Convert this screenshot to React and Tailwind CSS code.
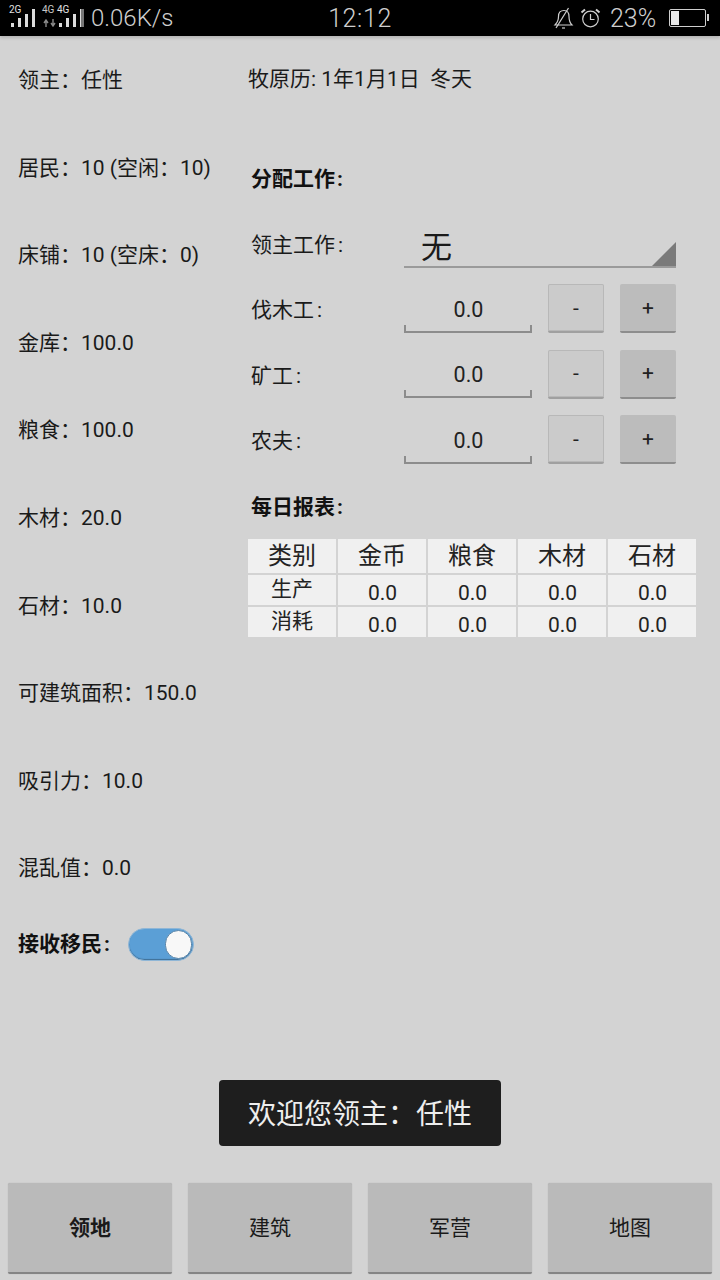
import React from "react";

function Bars() {
  const heights = [4, 9, 13, 18];
  return (
    <div className="flex items-end gap-[4px]">
      {heights.map((b, i) => (
        <div key={i} className="w-[3px] bg-[#dcdcdc]" style={{ height: b }} />
      ))}
    </div>
  );
}

function StatusBar() {
  return (
    <div className="relative h-[36px] bg-black flex items-center shrink-0 shadow-[0_2px_3px_rgba(0,0,0,0.15)] text-[#cfcfcf] font-light">
      <div className="absolute left-[9px] top-[4px] text-[10px] leading-[12px] font-normal text-[#e2e2e2]">2G</div>
      <div className="absolute left-[11px] bottom-[9px]"><Bars /></div>
      <div className="absolute left-[42px] top-[4px] text-[10px] leading-[12px] font-normal text-[#c8c8c8]">4G</div>
      <div className="absolute left-[57px] top-[4px] text-[10px] leading-[12px] font-normal text-[#e2e2e2]">4G</div>
      <div className="absolute left-[43px] top-[19px]">
        <svg width="13" height="8" viewBox="0 0 13 8" fill="none" stroke="#8a8a8a" strokeWidth="1.4">
          <path d="M3 8 V2 M1 4 L3 1 L5 4 M10 0 V6 M8 4 L10 7 L12 4" />
        </svg>
      </div>
      <div className="absolute left-[59px] bottom-[9px] flex items-end gap-[4px]">
        <Bars />
      </div>
      <div className="absolute left-[81px] bottom-[9px] w-[3px] h-[18px] bg-[#777777]" />
      <span className="absolute left-[91px] top-0 text-[24px] leading-[37px]">0.06K/s</span>
      <span className="absolute left-0 right-0 text-center text-[25px] leading-[37px] tracking-[0.6px]">12:12</span>
      <svg className="absolute left-[553px] top-[7px]" width="21" height="22" viewBox="0 0 21 22" fill="none" stroke="#cfcfcf" strokeWidth="1.2">
        <path d="M2 18 C4 16 5.5 14 5.5 9.5 C5.5 5.5 7.5 3.5 11 3.5 C14.5 3.5 16 5.5 16 9.5 C16 14 17 16 19 18 Z" />
        <path d="M9 21 H12" />
        <path d="M3 21 L15.5 1" />
      </svg>
      <svg className="absolute left-[580px] top-[8px]" width="21" height="20" viewBox="0 0 21 20" fill="none" stroke="#cfcfcf" strokeWidth="1.2">
        <circle cx="10.5" cy="11" r="7.8" />
        <path d="M10.5 6 V11.5 H14.5" />
        <path d="M1.5 4.5 L5 1.5 M19.5 4.5 L16 1.5" strokeWidth="2" />
      </svg>
      <span className="absolute left-[610px] top-0 text-[25px] leading-[37px]">23%</span>
      <div className="absolute left-[669px] top-[9px] w-[37px] h-[18px] border border-[#cfcfcf] rounded-[2px] p-[1px]">
        <div className="w-[8px] h-full bg-[#e8e8e8]" />
      </div>
      <div className="absolute left-[707px] top-[14px] w-[2px] h-[7px] bg-[#cfcfcf]" />
    </div>
  );
}

function LeftRow({ children }) {
  return <div className="h-[87.6px] flex items-center text-[21px] text-[#1a1a1a] whitespace-nowrap">{children}</div>;
}

function Toggle() {
  return (
    <div className="relative w-[66px] h-[33px] rounded-full bg-[#5b9fd6] border border-[#8fb6d6] shadow-[inset_0_-1px_1px_rgba(0,0,0,0.3)]">
      <div className="absolute right-[1px] top-[1px] w-[27px] h-[29px] rounded-full bg-[#f8f8f8] border border-[#5a85a8]" />
    </div>
  );
}

function SmallButton({ label, dark }) {
  return (
    <button className={`w-[56px] h-[49px] pt-[1px] rounded-[2px] text-[21px] text-[#222222] border-b-2 ${dark ? "bg-[#bcbcbc] border-[#8d8d8d]" : "bg-[#cbcbcb] border-[#a0a0a0] shadow-[inset_0_0_0_1px_#b8b8b8]"}`}>
      {label}
    </button>
  );
}

function Label({ text, bold }) {
  return (
    <span className={bold ? "font-bold text-[#111111] text-[21px]" : "text-[#1a1a1a] text-[21px]"}>
      {text}
      <span className={bold ? "ml-[2px]" : "ml-[3px]"}>:</span>
    </span>
  );
}

function WorkRow({ label }) {
  return (
    <div className="h-[65.5px] flex items-center">
      <div className="w-[156px] pl-[3px] mt-[-4px]"><Label text={label} /></div>
      <div className="w-[128px] h-[48px] pl-[1px] relative flex items-center justify-center pt-[4px] text-[21.5px] text-[#222222] border-b-2 border-[#8c8c8c] mt-[-8px]">
        0.0
        <span className="absolute left-0 bottom-0 w-[2px] h-[6px] bg-[#8c8c8c]" />
        <span className="absolute right-0 bottom-0 w-[2px] h-[6px] bg-[#8c8c8c]" />
      </div>
      <div className="ml-[16px] flex gap-[16px] mt-[-8px]">
        <SmallButton label="-" />
        <SmallButton label="+" dark />
      </div>
    </div>
  );
}

function TableRow({ cells, h, size, head }) {
  return (
    <div className="flex gap-[2px]" style={{ height: h }}>
      {cells.map((c, i) => (
        <div key={i} className={`w-[88px] bg-[#f0f0f0] flex items-center justify-center text-[#222222] ${size} ${!head && i > 0 ? "pt-[8px] pl-[1px]" : ""} ${!head && i === 0 ? "pt-[1px]" : ""}`}>{c}</div>
      ))}
    </div>
  );
}

function BottomButton({ label, bold }) {
  return (
    <button className={`flex-1 h-[91px] pt-[3px] bg-[#bababa] border-b-2 border-[#858585] rounded-[2px] shadow-[0_0_1px_rgba(0,0,0,0.25)] text-[21px] text-[#1a1a1a] ${bold ? "font-bold" : ""}`}>
      {label}
    </button>
  );
}

export default function App() {
  return (
    <div className="relative w-[720px] h-[1280px] bg-[#d3d3d3] flex flex-col overflow-hidden font-['Roboto','Noto_Sans_CJK_SC',sans-serif]">
      <StatusBar />
      <div className="flex-1 flex">
        <div className="w-[248px] pl-[18px] pt-[1px]">
          <LeftRow>领主：任性</LeftRow>
          <LeftRow>居民：10 (空闲：10)</LeftRow>
          <LeftRow>床铺：10 (空床：0)</LeftRow>
          <LeftRow>金库：100.0</LeftRow>
          <LeftRow>粮食：100.0</LeftRow>
          <LeftRow>木材：20.0</LeftRow>
          <LeftRow>石材：10.0</LeftRow>
          <LeftRow>可建筑面积：150.0</LeftRow>
          <LeftRow>吸引力：10.0</LeftRow>
          <LeftRow>混乱值：0.0</LeftRow>
          <div className="flex items-center h-[66px] mt-[-1px]">
            <span className="w-[110px]"><Label text="接收移民" bold /></span>
            <Toggle />
          </div>
        </div>
        <div className="flex-1">
          <div className="h-[88px] flex items-center text-[21px] text-[#1a1a1a] whitespace-pre">牧原历: 1年1月1日  冬天</div>
          <div className="h-[38px] mt-[37px] flex items-center pl-[3px]"><Label text="分配工作" bold /></div>
          <div className="h-[65px] mt-[16px] flex items-center">
            <div className="w-[156px] pl-[3px] mt-[-4px]"><Label text="领主工作" /></div>
            <div className="relative w-[272px] h-[46px] mt-[-5px] border-b-2 border-[#9a9a9a] text-[31px] leading-[44px] pt-[4px] text-[#1a1a1a] pl-[17px]">
              无
              <svg className="absolute right-0 bottom-0" width="24" height="24" viewBox="0 0 24 24">
                <path d="M24 0 V24 H0 Z" fill="#7a7a7a" />
              </svg>
            </div>
          </div>
          <WorkRow label="伐木工" />
          <WorkRow label="矿工" />
          <WorkRow label="农夫" />
          <div className="h-[38px] mt-[12px] flex items-center pl-[3px]"><Label text="每日报表" bold /></div>
          <div className="mt-[12px] flex flex-col gap-[2px]">
            <TableRow head h={34} size="text-[24px]" cells={["类别", "金币", "粮食", "木材", "石材"]} />
            <TableRow h={30} size="text-[21px]" cells={["生产", "0.0", "0.0", "0.0", "0.0"]} />
            <TableRow h={30} size="text-[21px]" cells={["消耗", "0.0", "0.0", "0.0", "0.0"]} />
          </div>
        </div>
      </div>
      <div className="absolute left-[219px] top-[1080px] w-[282px] h-[66px] pt-[3px] rounded-[4px] bg-[#1e1e1e] flex items-center justify-center text-[28px] text-[#eeeeee]">
        欢迎您领主：任性
      </div>
      <div className="flex gap-[16px] px-[8px] pb-[6px]">
        <BottomButton label="领地" bold />
        <BottomButton label="建筑" />
        <BottomButton label="军营" />
        <BottomButton label="地图" />
      </div>
    </div>
  );
}
